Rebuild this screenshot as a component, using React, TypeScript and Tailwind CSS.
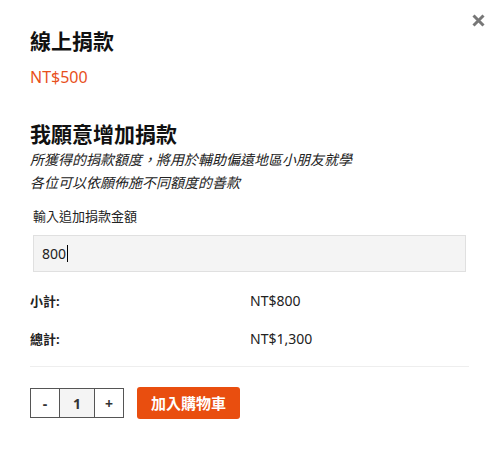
import React from "react";

export default function App() {
  const font = { fontFamily: '"Noto Sans", "Noto Sans CJK TC", sans-serif' };
  return (
    <div className="relative w-[499px] h-[454px] bg-white text-[#222]" style={font}>
      <button className="absolute right-[14px] top-[14px] w-[13px] h-[13px] flex items-center justify-center" aria-label="close">
        <svg width="13" height="13" viewBox="0 0 13 13">
          <path d="M1.5 1.5 L11.5 11.5 M11.5 1.5 L1.5 11.5" stroke="#777" strokeWidth="3" strokeLinecap="butt" />
        </svg>
      </button>
      <div className="px-[30px] pt-[27px] flex flex-col">
        <h1 className="text-[21px] leading-[28px] font-bold text-[#111]">線上捐款</h1>
        <div className="mt-[10px] text-[16px] leading-[24px] text-[#e8501c]">NT$500</div>

        <h2 className="mt-[31px] text-[21px] leading-[28px] font-bold text-[#111]">我願意增加捐款</h2>
        <p className="italic text-[14px] leading-[23px] text-[#222]">
          所獲得的捐款額度，將用於輔助偏遠地區小朋友就學
          <br />
          各位可以依願佈施不同額度的善款
        </p>

        <div className="mt-[12px] px-[3px]">
          <div className="text-[13px] leading-[20px] text-[#222]">輸入追加捐款金額</div>
          <div className="mt-[9px] h-[37px] bg-[#f4f4f4] border border-[#e0e0e0] flex items-center pl-[8px] text-[14px]">
            <span>800</span>
            <span className="inline-block w-[1px] h-[17px] bg-black ml-[1px]" />
          </div>
        </div>

        <div className="mt-[19px] grid grid-cols-[220px_1fr] text-[14px] leading-[20px] gap-y-[18px]">
          <div className="font-bold text-[13px]">小計:</div>
          <div>NT$800</div>
          <div className="font-bold text-[13px]">總計:</div>
          <div>NT$1,300</div>
        </div>

        <div className="mt-[17px] h-px bg-[#eeeeee]" />

        <div className="mt-[20px] flex items-center gap-[13px]">
          <div className="flex h-[30px] border border-[#555] text-[14px] font-bold text-[#333]">
            <div className="w-[28px] flex items-center justify-center">-</div>
            <div className="w-[36px] flex items-center justify-center bg-[#f4f4f4] border-x border-[#555]">1</div>
            <div className="w-[28px] flex items-center justify-center">+</div>
          </div>
          <button className="h-[32px] w-[103px] rounded-[3px] bg-[#e94e0f] text-white text-[15px] font-bold flex items-center justify-center">
            加入購物車
          </button>
        </div>
      </div>
    </div>
  );
}
